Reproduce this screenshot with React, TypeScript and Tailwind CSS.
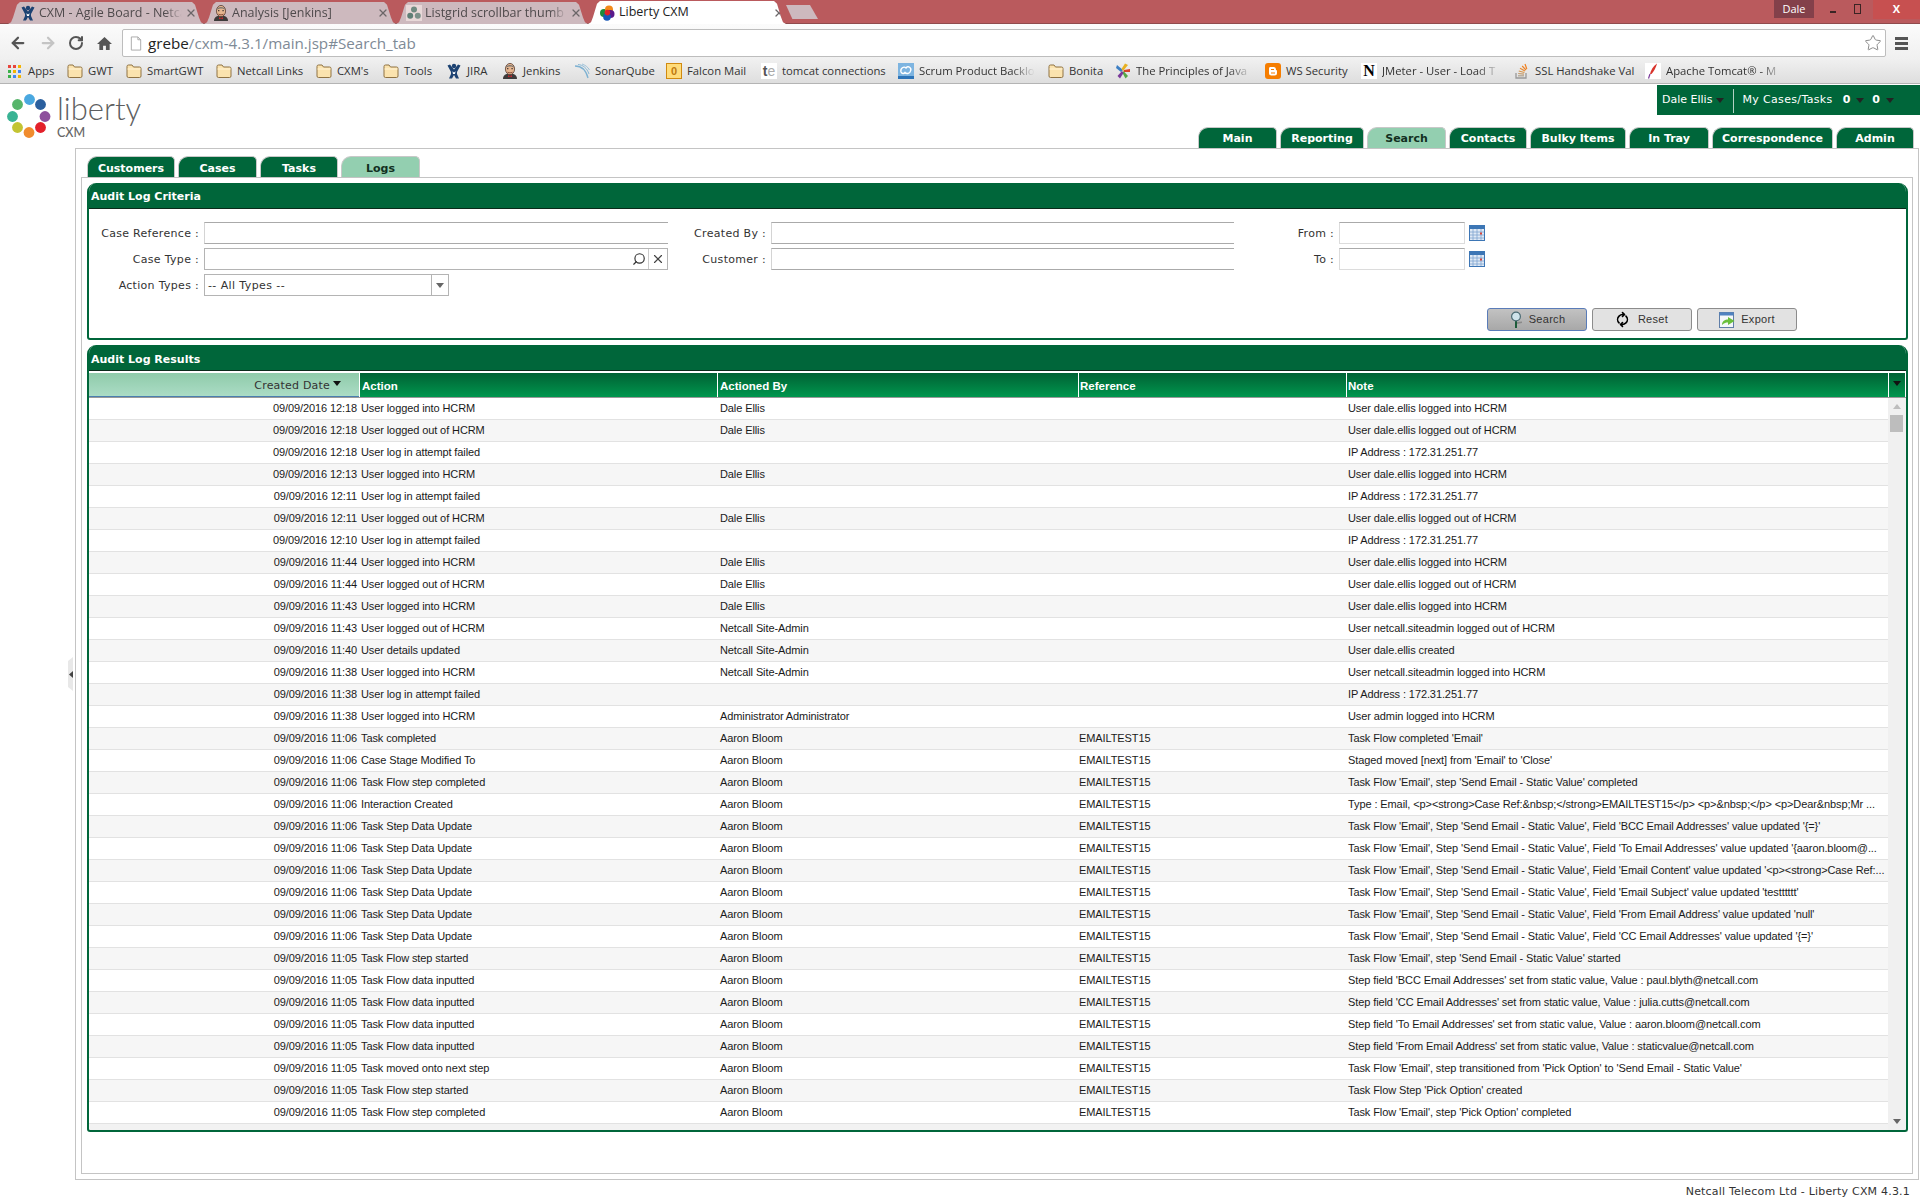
import React from 'react';
import { ArrowLeft, ArrowRight, RotateCw, Star, Search, X, RefreshCw } from 'lucide-react';

const uiFont = "font-['DejaVu_Sans',sans-serif]";
const gridFont = "font-['Liberation_Sans',sans-serif]";
const chromeFont = "font-['Open_Sans',sans-serif]";

// 收藏夾 / 分頁小圖示
const JiraIcon = () => (
  <svg viewBox="0 0 16 16" className="w-[16px] h-[16px] shrink-0">
    <circle cx="8" cy="3" r="2.2" fill="#1c4272" />
    <path d="M1.5 2.5 L4 1.5 L8 6.5 L12 1.5 L14.5 2.5 L11 9 L11 11 L13 15.5 L10 15.5 L8 12 L6 15.5 L3 15.5 L5 11 L5 9 Z" fill="#1c4272" />
    <path d="M6.4 8.2 L8 9.6 L9.6 8.2 L9 11 L7 11 Z" fill="#fff" />
  </svg>
);

const JenkinsIcon = () => (
  <svg viewBox="0 0 16 16" className="w-[16px] h-[16px] shrink-0">
    <path d="M1 16 C1 12 4 10.5 8 10.5 C12 10.5 15 12 15 16 Z" fill="#3d3a3a" />
    <ellipse cx="8" cy="6" rx="4.6" ry="5.6" fill="#e6b58f" stroke="#5b4034" strokeWidth="0.8" />
    <path d="M3.6 5 C4 1 12 1 12.4 5 C10.5 3 6 3 3.6 5 Z" fill="#7c7770" />
    <path d="M5.4 9.2 Q8 10.6 10.6 9.2" stroke="#7a3b2a" strokeWidth="0.8" fill="none" />
    <path d="M6 12.2 L8 13 L10 12.2 L10 14.2 L8 13.5 L6 14.2 Z" fill="#c8282c" />
    <rect x="5" y="5.2" width="1.4" height="1" fill="#222" />
    <rect x="9.4" y="5.2" width="1.4" height="1" fill="#222" />
  </svg>
);

const ListgridIcon = () => (
  <svg viewBox="0 0 16 16" className="w-[16px] h-[16px] shrink-0">
    <rect width="16" height="16" fill="#e8d8d8" />
    <circle cx="8" cy="4.5" r="3" fill="#6f8a80" />
    <circle cx="4.2" cy="10.8" r="3" fill="#5f7f76" />
    <circle cx="11.8" cy="10.8" r="3" fill="#7b918a" />
  </svg>
);

const LibertyTabIcon = () => (
  <svg viewBox="0 0 16 16" className="w-[16px] h-[16px] shrink-0">
    <circle cx="5" cy="8" r="4" fill="#1d8a3c" />
    <circle cx="10" cy="4.6" r="4" fill="#f28a1a" />
    <circle cx="11.5" cy="9" r="4" fill="#5a1a8c" />
    <circle cx="8" cy="12" r="3.8" fill="#1858b8" />
    <circle cx="8.4" cy="7.6" r="2.8" fill="#e0202a" />
  </svg>
);

const FolderIcon = () => (
  <svg viewBox="0 0 16 16" className="w-[16px] h-[16px] shrink-0">
    <path d="M1 3.5 Q1 2 2.5 2 L6 2 L7.5 4 L13.5 4 Q15 4 15 5.5 L15 13 Q15 14.5 13.5 14.5 L2.5 14.5 Q1 14.5 1 13 Z" fill="#fbe3ae" stroke="#8f7242" strokeWidth="1" />
    <path d="M1.5 6 L14.5 6" stroke="#fff3d6" strokeWidth="1" />
  </svg>
);

const AppsIcon = () => (
  <svg viewBox="0 0 13 13" className="w-[13px] h-[13px] shrink-0">
    <rect x="0" y="0" width="3" height="3" fill="#e8453c" />
    <rect x="5" y="0" width="3" height="3" fill="#e8453c" />
    <rect x="10" y="0" width="3" height="3" fill="#f4b400" />
    <rect x="0" y="5" width="3" height="3" fill="#3bb14a" />
    <rect x="5" y="5" width="3" height="3" fill="#f4b400" />
    <rect x="10" y="5" width="3" height="3" fill="#4285f4" />
    <rect x="0" y="10" width="3" height="3" fill="#3bb14a" />
    <rect x="5" y="10" width="3" height="3" fill="#4285f4" />
    <rect x="10" y="10" width="3" height="3" fill="#f4b400" />
  </svg>
);

const SonarIcon = () => (
  <svg viewBox="0 0 16 16" className="w-[16px] h-[16px] shrink-0" fill="none" stroke="#7fb2d2">
    <path d="M1 3 C7 3 12 7 14 15" strokeWidth="1.3" />
    <path d="M4 1.5 C9 2 13 5 15 11" strokeWidth="0.9" />
    <path d="M8 1 C11 2 14 4 15.5 7" strokeWidth="0.7" />
  </svg>
);

const FalconIcon = () => (
  <div className="w-[16px] h-[16px] shrink-0 bg-[#ffdc7a] border border-[#d08a10] flex items-center justify-center">
    <span className={`${gridFont} text-[11px] leading-none font-bold text-[#c07a10]`}>0</span>
  </div>
);

const TeIcon = () => (
  <div className="w-[16px] h-[16px] shrink-0 bg-white flex items-center justify-center">
    <span className={`${gridFont} text-[14px] leading-none font-bold text-[#555]`}>t</span>
    <span className={`${gridFont} text-[14px] leading-none text-[#aaa]`}>e</span>
  </div>
);

const ScrumIcon = () => (
  <svg viewBox="0 0 16 16" className="w-[16px] h-[16px] shrink-0">
    <rect width="16" height="16" fill="#7db4e0" />
    <rect y="13" width="16" height="3" fill="#2d74b8" />
    <path d="M3 9 C2 5 6 3 8 5 C10 2 14 5 12.5 8 C12 11 8 11 7 9.5 C6 11 4 11 3 9 Z" fill="none" stroke="#fff" strokeWidth="1.4" />
  </svg>
);

const PinwheelIcon = () => (
  <svg viewBox="0 0 16 16" className="w-[16px] h-[16px] shrink-0">
    <path d="M2 2 L8 7 L6 9 L1 5 Z" fill="#3d7fc4" />
    <path d="M10 0.5 L13 2 L8 8 L6.5 6 Z" fill="#e8b020" />
    <path d="M15 6 L15 9 L8.5 9 L9 7 Z" fill="#d8442a" />
    <path d="M13 13 L10.5 15.5 L7 9 L9 8.5 Z" fill="#55a845" />
    <path d="M5 15.5 L2.5 13 L7 8 L8.5 10 Z" fill="#7a3a9a" />
  </svg>
);

const BloggerIcon = () => (
  <svg viewBox="0 0 16 16" className="w-[16px] h-[16px] shrink-0">
    <rect width="16" height="16" rx="3" fill="#f57d00" />
    <path d="M5 4 L9 4 Q11 4 11 6.5 L11 7 Q12 7 12 8 L12 10 Q12 12.5 9.5 12.5 L6.5 12.5 Q4 12.5 4 10 L4 5.5 Q4 4 5 4 Z" fill="#fff" />
    <rect x="6" y="6" width="3" height="1" fill="#f57d00" />
    <rect x="6" y="9.5" width="4" height="1" fill="#f57d00" />
  </svg>
);

const JMeterIcon = () => (
  <div className="w-[16px] h-[16px] shrink-0 bg-white flex items-center justify-center">
    <span className="font-['Liberation_Serif',serif] text-[16px] leading-none font-bold text-black">N</span>
  </div>
);

const StackIcon = () => (
  <svg viewBox="0 0 16 16" className="w-[16px] h-[16px] shrink-0" fill="none">
    <path d="M2 10 L2 15 L12 15 L12 10" stroke="#999" strokeWidth="1.3" />
    <path d="M4 12.8 L10 12.8" stroke="#b0a28e" strokeWidth="1.2" />
    <path d="M4.2 10.5 L10 11.2" stroke="#c49a6a" strokeWidth="1.2" />
    <path d="M4.8 8 L10.4 9.5" stroke="#d8954a" strokeWidth="1.2" />
    <path d="M6 5.2 L11 8" stroke="#e88a30" strokeWidth="1.2" />
    <path d="M8.2 3 L12 7" stroke="#f08020" strokeWidth="1.2" />
    <path d="M11 1 L12.8 6" stroke="#f08020" strokeWidth="1.2" />
  </svg>
);

const FeatherIcon = () => (
  <svg viewBox="0 0 16 16" className="w-[16px] h-[16px] shrink-0">
    <rect width="16" height="16" fill="#fff" />
    <path d="M12 0.5 C8 3 6 7 5 11 L6.5 11 C9 8 11 5 12 0.5 Z" fill="#d8342c" />
    <path d="M5 11 L3.5 15.5" stroke="#7a3a9a" strokeWidth="1.2" />
  </svg>
);

const chromeTabs = [
  { title: 'CXM - Agile Board - Netca', icon: <JiraIcon />, width: 'w-[196px]', textWidth: 'w-[143px]', pad: 'pl-[12px]' },
  { title: 'Analysis [Jenkins]', icon: <JenkinsIcon />, width: 'w-[192px]', textWidth: 'w-[142px]', pad: 'pl-[9px]' },
  { title: 'Listgrid scrollbar thumb si', icon: <ListgridIcon />, width: 'w-[192px]', textWidth: 'w-[142px]', pad: 'pl-[10px]' },
];

const bookmarks = [
  { label: 'GWT', icon: <FolderIcon />, width: 'w-[25px]' },
  { label: 'SmartGWT', icon: <FolderIcon />, width: 'w-[56px]' },
  { label: 'Netcall Links', icon: <FolderIcon />, width: 'w-[66px]' },
  { label: "CXM's", icon: <FolderIcon />, width: 'w-[33px]' },
  { label: 'Tools', icon: <FolderIcon />, width: 'w-[29px]' },
  { label: 'JIRA', icon: <JiraIcon />, width: 'w-[22px]' },
  { label: 'Jenkins', icon: <JenkinsIcon />, width: 'w-[38px]' },
  { label: 'SonarQube', icon: <SonarIcon />, width: 'w-[58px]' },
  { label: 'Falcon Mail', icon: <FalconIcon />, width: 'w-[61px]' },
  { label: 'tomcat connections', icon: <TeIcon />, width: 'w-[103px]' },
  { label: 'Scrum Product Backlo', icon: <ScrumIcon />, width: 'w-[116px]', fade: true },
  { label: 'Bonita', icon: <FolderIcon />, width: 'w-[33px]' },
  { label: 'The Principles of Java', icon: <PinwheelIcon />, width: 'w-[116px]', fade: true },
  { label: 'WS Security', icon: <BloggerIcon />, width: 'w-[62px]' },
  { label: 'JMeter - User - Load T', icon: <JMeterIcon />, width: 'w-[119px]', fade: true },
  { label: 'SSL Handshake Val', icon: <StackIcon />, width: 'w-[97px]' },
  { label: 'Apache Tomcat® - M', icon: <FeatherIcon />, width: 'w-[118px]', fade: true },
];

const mainTabs = [
  { label: 'Main', width: 'w-[79px]' },
  { label: 'Reporting', width: 'w-[84px]' },
  { label: 'Search', width: 'w-[79px]', active: true },
  { label: 'Contacts', width: 'w-[78px]' },
  { label: 'Bulky Items', width: 'w-[96px]' },
  { label: 'In Tray', width: 'w-[80px]' },
  { label: 'Correspondence', width: 'w-[121px]' },
  { label: 'Admin', width: 'w-[78px]' },
];

const subTabs = [
  { label: 'Customers', width: 'w-[88px]' },
  { label: 'Cases', width: 'w-[79px]' },
  { label: 'Tasks', width: 'w-[78px]' },
  { label: 'Logs', width: 'w-[79px]', active: true },
];

const D = '09/09/2016';
const AB = 'Aaron Bloom';
const ET = 'EMAILTEST15';
const SEND = "Task Flow 'Email', Step 'Send Email - Static Value', Field";
const IP = 'IP Address : 172.31.251.77';
const IN = 'User logged into HCRM';
const OUT = 'User logged out of HCRM';
const FAIL = 'User log in attempt failed';
const DE = 'Dale Ellis';
const NS = 'Netcall Site-Admin';
const UPD = 'Task Step Data Update';
const INP = 'Task Flow data inputted';

const rows: string[][] = [
  ['12:18', IN, DE, '', 'User dale.ellis logged into HCRM'],
  ['12:18', OUT, DE, '', 'User dale.ellis logged out of HCRM'],
  ['12:18', FAIL, '', '', IP],
  ['12:13', IN, DE, '', 'User dale.ellis logged into HCRM'],
  ['12:11', FAIL, '', '', IP],
  ['12:11', OUT, DE, '', 'User dale.ellis logged out of HCRM'],
  ['12:10', FAIL, '', '', IP],
  ['11:44', IN, DE, '', 'User dale.ellis logged into HCRM'],
  ['11:44', OUT, DE, '', 'User dale.ellis logged out of HCRM'],
  ['11:43', IN, DE, '', 'User dale.ellis logged into HCRM'],
  ['11:43', OUT, NS, '', 'User netcall.siteadmin logged out of HCRM'],
  ['11:40', 'User details updated', NS, '', 'User dale.ellis created'],
  ['11:38', IN, NS, '', 'User netcall.siteadmin logged into HCRM'],
  ['11:38', FAIL, '', '', IP],
  ['11:38', IN, 'Administrator Administrator', '', 'User admin logged into HCRM'],
  ['11:06', 'Task completed', AB, ET, "Task Flow completed 'Email'"],
  ['11:06', 'Case Stage Modified To', AB, ET, "Staged moved [next] from 'Email' to 'Close'"],
  ['11:06', 'Task Flow step completed', AB, ET, "Task Flow 'Email', step 'Send Email - Static Value' completed"],
  ['11:06', 'Interaction Created', AB, ET, 'Type : Email, <p><strong>Case Ref:&nbsp;</strong>EMAILTEST15</p> <p>&nbsp;</p> <p>Dear&nbsp;Mr ...'],
  ['11:06', UPD, AB, ET, `${SEND} 'BCC Email Addresses' value updated '{=}'`],
  ['11:06', UPD, AB, ET, `${SEND} 'To Email Addresses' value updated '{aaron.bloom@...`],
  ['11:06', UPD, AB, ET, `${SEND} 'Email Content' value updated '<p><strong>Case Ref:...`],
  ['11:06', UPD, AB, ET, `${SEND} 'Email Subject' value updated 'testttttt'`],
  ['11:06', UPD, AB, ET, `${SEND} 'From Email Address' value updated 'null'`],
  ['11:06', UPD, AB, ET, `${SEND} 'CC Email Addresses' value updated '{=}'`],
  ['11:05', 'Task Flow step started', AB, ET, "Task Flow 'Email', step 'Send Email - Static Value' started"],
  ['11:05', INP, AB, ET, "Step field 'BCC Email Addresses' set from static value, Value : paul.blyth@netcall.com"],
  ['11:05', INP, AB, ET, "Step field 'CC Email Addresses' set from static value, Value : julia.cutts@netcall.com"],
  ['11:05', INP, AB, ET, "Step field 'To Email Addresses' set from static value, Value : aaron.bloom@netcall.com"],
  ['11:05', INP, AB, ET, "Step field 'From Email Address' set from static value, Value : staticvalue@netcall.com"],
  ['11:05', 'Task moved onto next step', AB, ET, "Task Flow 'Email', step transitioned from 'Pick Option' to 'Send Email - Static Value'"],
  ['11:05', 'Task Flow step started', AB, ET, "Task Flow Step 'Pick Option' created"],
  ['11:05', 'Task Flow step completed', AB, ET, "Task Flow 'Email', step 'Pick Option' completed"],
];

const Triangle = ({ className = '' }: { className?: string }) => (
  <svg viewBox="0 0 8 5" className={`w-[8px] h-[5px] ${className}`}>
    <path d="M0 0 L8 0 L4 5 Z" fill="currentColor" />
  </svg>
);

const CalendarIcon = () => (
  <svg viewBox="0 0 16 16" className="w-[16px] h-[16px] shrink-0">
    <rect x="0.5" y="0.5" width="15" height="15" fill="#dfe9f5" stroke="#3d76b5" />
    <rect x="0.5" y="0.5" width="15" height="3.5" fill="#3d76b5" />
    <path d="M4 4 V15 M8 4 V15 M12 4 V15 M1 7 H15 M1 10 H15 M1 13 H15" stroke="#7da3cf" strokeWidth="0.8" />
    <rect x="11" y="7.5" width="2" height="2" fill="#d8443a" />
  </svg>
);

const MagnifierIcon = () => (
  <svg viewBox="0 0 14 18" className="w-[14px] h-[18px] shrink-0">
    <path d="M6 10 L8 10 L8 17 L6 17 Z" fill="#1d5c3a" />
    <path d="M8 11 L13 10.5 L13 12 L8 13 Z" fill="#8a8a8a" />
    <circle cx="7" cy="5.5" r="4.4" fill="#cfe3ea" stroke="#4a6a72" strokeWidth="1.2" />
  </svg>
);

const ExportIcon = () => (
  <svg viewBox="0 0 16 16" className="w-[16px] h-[16px] shrink-0">
    <rect x="0.5" y="0.5" width="14" height="15" fill="#f4f7fa" stroke="#5f7ea8" />
    <rect x="0.5" y="0.5" width="14" height="3" fill="#4f82c0" />
    <path d="M3 13 C3 9 6 7.5 9 7.5 L9 5 L15.5 9 L9 13 L9 10.5 C7 10.5 5 11 3 13 Z" fill="#6abf3c" />
  </svg>
);

const Label = ({ width, children }: { width: string; children: React.ReactNode }) => (
  <div className={`${width} shrink-0 pr-[5px] text-right text-[11px] text-[#333] tracking-[0.3px] leading-[24px] ${uiFont}`}>{children}</div>
);

const App: React.FC = () => {
  return (
    <div className="w-[1920px] h-[1200px] flex flex-col overflow-hidden bg-white">
      {/* 瀏覽器分頁列 */}
      <div className={`h-[24px] shrink-0 flex items-end bg-[#ba5a5d] border-b border-[#8f4a4c] pl-[8px] ${chromeFont}`}>
        {chromeTabs.map((tab) => (
          <div
            key={tab.title}
            className={`${tab.width} ${tab.pad} h-[22px] shrink-0 -mb-px flex items-center gap-[3px] bg-[#cdb9be] text-[12.5px] text-[#4f4a4c] [clip-path:polygon(0_100%,3px_92%,5px_70%,9px_12%,12px_0,calc(100%-12px)_0,calc(100%-9px)_12%,calc(100%-5px)_70%,calc(100%-3px)_92%,100%_100%)]`}
          >
            {tab.icon}
            <span className={`${tab.textWidth} whitespace-nowrap [mask-image:linear-gradient(to_right,black_88%,transparent)]`}>{tab.title}</span>
            <X className="w-[12px] h-[12px] text-[#6b6668] shrink-0" strokeWidth={2.5} />
          </div>
        ))}
        <div className="w-[198px] h-[23px] pl-[11px] shrink-0 -mb-px flex items-center gap-[4px] bg-white text-[12.5px] text-[#222] [clip-path:polygon(0_100%,3px_92%,5px_70%,9px_12%,12px_0,calc(100%-12px)_0,calc(100%-9px)_12%,calc(100%-5px)_70%,calc(100%-3px)_92%,100%_100%)]">
          <LibertyTabIcon />
          <span className="w-[150px] whitespace-nowrap">Liberty CXM</span>
          <X className="w-[12px] h-[12px] text-[#6b6668] shrink-0" strokeWidth={2.5} />
        </div>
        <div className="w-[32px] h-[14px] mb-[4px] shrink-0 bg-[#cdb9be] [clip-path:polygon(0_0,75%_0,100%_100%,20%_100%)]" />
        <div className="flex-1" />
        <div className="self-start h-[18px] w-[40px] mr-[16px] bg-[#83404a] text-white text-[11px] flex items-center justify-center">Dale</div>
        <div className="self-start h-[18px] flex items-center">
          <div className="w-[6px] h-[2px] bg-[#3a2424] mt-[6px] mr-[18px]" />
          <div className="w-[7px] h-[10px] border border-[#3a2424] mr-[12px]" />
          <div className="w-[47px] h-[19px] bg-[#c75050] text-white text-[11px] font-bold flex items-center justify-center">X</div>
        </div>
      </div>

      {/* 網址列 */}
      <div className="h-[35px] shrink-0 flex items-center bg-gradient-to-b from-[#fbfbfb] to-[#f0f0f0] pl-[9px] pt-[3px]">
        <ArrowLeft className="w-[18px] h-[18px] text-[#555]" strokeWidth={3} />
        <ArrowRight className="w-[18px] h-[18px] ml-[12px] text-[#c4c4c4]" strokeWidth={3} />
        <RotateCw className="w-[16px] h-[16px] ml-[11px] text-[#555]" strokeWidth={3} />
        <svg viewBox="0 0 16 16" className="w-[15px] h-[15px] ml-[13px]">
          <path d="M8 1 L16 8.5 L13.5 8.5 L13.5 15 L9.5 15 L9.5 10.5 L6.5 10.5 L6.5 15 L2.5 15 L2.5 8.5 L0 8.5 Z" fill="#555" />
        </svg>
        <div className="w-[1764px] h-[28px] ml-[10px] flex items-center bg-white border border-[#bdbdbd] rounded-[2px] pl-[7px]">
          <svg viewBox="0 0 12 16" className="w-[12px] h-[15px] shrink-0">
            <path d="M1 1 L8 1 L11 4 L11 15 L1 15 Z M8 1 L8 4 L11 4" fill="#fff" stroke="#a8a8a8" />
          </svg>
          <span className={`ml-[6px] text-[15.2px] ${chromeFont}`}>
            <span className="text-[#222]">grebe</span>
            <span className="text-[#7e8a96]">/cxm-4.3.1/main.jsp#Search_tab</span>
          </span>
          <div className="flex-1" />
          <Star className="w-[18px] h-[18px] mr-[3px] text-[#888]" strokeWidth={1.3} />
        </div>
        <div className="ml-[9px] flex flex-col gap-[2px]">
          <div className="w-[13px] h-[3px] bg-[#555]" />
          <div className="w-[13px] h-[3px] bg-[#555]" />
          <div className="w-[13px] h-[3px] bg-[#555]" />
        </div>
      </div>

      {/* 書籤列 */}
      <div className={`h-[25px] shrink-0 flex items-center gap-[13px] pl-[8px] bg-gradient-to-b from-[#f0f0f0] to-[#dedede] border-b border-[#b4b4b4] text-[11.3px] text-[#333] ${chromeFont}`}>
        <div className="flex items-center gap-[7px]">
          <AppsIcon />
          <span className="w-[26px]">Apps</span>
        </div>
        {bookmarks.map((b) => (
          <div key={b.label} className="flex items-center gap-[5px] shrink-0">
            {b.icon}
            <span className={`${b.width} whitespace-nowrap ${b.fade ? '[mask-image:linear-gradient(to_right,black_80%,transparent)]' : ''}`}>{b.label}</span>
          </div>
        ))}
      </div>

      {/* Liberty 頁首 */}
      <div className="h-[64px] shrink-0 flex justify-between">
        <div className="flex pl-[7px] pt-[10px]">
          <svg viewBox="0 0 44 44" className="w-[44px] h-[44px] shrink-0">
            <circle cx="22.5" cy="5.5" r="5.4" fill="#4aa8e0" />
            <circle cx="33.5" cy="10.5" r="5.4" fill="#2a5f9e" />
            <circle cx="38" cy="22.5" r="5.4" fill="#8e4f9c" />
            <circle cx="33.5" cy="33.5" r="5.4" fill="#e3202a" />
            <circle cx="22" cy="38.5" r="5.4" fill="#f08c2e" />
            <circle cx="10.5" cy="33.5" r="5.4" fill="#c3c433" />
            <circle cx="5.5" cy="22.5" r="5.4" fill="#39b394" />
            <circle cx="10.5" cy="10.5" r="5.4" fill="#57b56b" />
          </svg>
          <div className="ml-[6px] -mt-px flex flex-col text-[#5d5e60] font-['Lato',sans-serif]">
            <span className="text-[31px] leading-[30px] font-light">liberty</span>
            <span className="mt-[4px] text-[12.5px] leading-[12px] font-medium text-[#666]">CXM</span>
          </div>
        </div>
        <div className="flex flex-col items-end">
          <div className={`w-[263px] h-[30px] mt-px pt-px flex items-center bg-[#00663a] pl-[5px] text-[11px] text-white ${uiFont}`}>
            <span>Dale Ellis</span>
            <Triangle className="ml-[4px] text-[#222]" />
            <div className="w-px h-[24px] bg-white/70 ml-[9px]" />
            <span className="ml-[8px] tracking-[0.35px]">My Cases/Tasks</span>
            <span className="ml-[10px] font-bold">0</span>
            <Triangle className="ml-[6px] text-[#222]" />
            <span className="ml-[8px] font-bold">0</span>
            <Triangle className="ml-[6px] text-[#222]" />
          </div>
          <div className="flex gap-[3px] mr-[6px] mt-[12px]">
            {mainTabs.map((t) => (
              <div
                key={t.label}
                className={`${t.width} h-[21px] pt-[2px] flex items-center justify-center border border-b-0 border-[#c8c8c8] rounded-tl-[10px] rounded-tr-[5px] text-[11px] font-bold ${uiFont} ${t.active ? 'bg-[#93cfb0] text-[#12301f]' : 'bg-[#00663a] text-white'}`}
              >
                {t.label}
              </div>
            ))}
          </div>
        </div>
      </div>

      {/* 主要內容 */}
      <div className="flex-1 flex min-h-0">
        <div className="w-[75px] shrink-0 flex items-center justify-end pr-[2px]">
          <div className="w-[5px] h-[34px] flex items-center justify-center bg-[#e8e8e8] [clip-path:polygon(0_12%,100%_0,100%_100%,0_88%)]">
            <svg viewBox="0 0 4 7" className="w-[4px] h-[7px]"><path d="M4 0 L0 3.5 L4 7 Z" fill="#444" /></svg>
          </div>
        </div>
        <div className="w-[844px] flex-1 mr-px">
          <div className="h-[1032px] flex flex-col border border-[#c4c4c4] pl-[5px] pr-[5px] pb-[5px] pt-[7px]">
            <div className="flex gap-[3px] pl-[6px]">
              {subTabs.map((t) => (
                <div
                  key={t.label}
                  className={`${t.width} h-[21px] pt-[4px] flex items-center justify-center border border-b-0 border-[#c8c8c8] rounded-tl-[10px] rounded-tr-[5px] text-[11px] font-bold ${uiFont} ${t.active ? 'bg-[#93cfb0] text-[#12301f]' : 'bg-[#00663a] text-white'}`}
                >
                  {t.label}
                </div>
              ))}
            </div>
            <div className="flex-1 border border-[#c4c4c4] pl-[5px] pr-[4px] pt-[5px] flex flex-col gap-[5px]">
              {/* Audit Log Criteria */}
              <div className="h-[157px] flex flex-col rounded-t-[9px] rounded-b-[3px] border-2 border-t-0 border-[#00663a] bg-white overflow-hidden">
                <div className={`h-[26px] shrink-0 -mx-[2px] px-[4px] pt-[4px] flex items-center bg-[#00663a] border-b border-[#0a2a1a] text-[11px] font-bold text-white ${uiFont}`}>
                  Audit Log Criteria
                </div>
                <div className="flex-1 pt-[13px]">
                  <div className="flex h-[22px]">
                    <Label width="w-[115px]">Case Reference :</Label>
                    <div className="w-[464px] border-y border-l border-t-[#aaa] border-b-[#aaa] border-l-[#d4d4d4]" />
                    <Label width="w-[103px]">Created By :</Label>
                    <div className="w-[463px] border-y border-l border-t-[#aaa] border-b-[#aaa] border-l-[#d4d4d4]" />
                    <Label width="w-[105px]">From :</Label>
                    <div className="w-[126px] border border-t-[#aaa] border-[#dcdcdc]" />
                    <div className="ml-[4px] flex items-center"><CalendarIcon /></div>
                  </div>
                  <div className="flex h-[22px] mt-[4px]">
                    <Label width="w-[115px]">Case Type :</Label>
                    <div className="w-[464px] flex border border-[#b4b4b4]">
                      <div className="flex-1" />
                      <div className="w-[20px] flex items-center justify-center border-r border-[#ccc]">
                        <Search className="w-[14px] h-[14px] text-[#333] -scale-x-100" strokeWidth={2} />
                      </div>
                      <div className="w-[18px] flex items-center justify-center">
                        <X className="w-[14px] h-[14px] text-[#444]" strokeWidth={2} />
                      </div>
                    </div>
                    <Label width="w-[103px]">Customer :</Label>
                    <div className="w-[463px] border-y border-l border-t-[#aaa] border-b-[#aaa] border-l-[#d4d4d4]" />
                    <Label width="w-[105px]">To :</Label>
                    <div className="w-[126px] border border-t-[#aaa] border-[#dcdcdc]" />
                    <div className="ml-[4px] flex items-center"><CalendarIcon /></div>
                  </div>
                  <div className="flex h-[22px] mt-[4px]">
                    <Label width="w-[115px]">Action Types :</Label>
                    <div className={`w-[245px] flex border border-[#b4b4b4] text-[11px] text-[#333] tracking-[0.4px] ${uiFont}`}>
                      <div className="flex-1 pl-[3px] leading-[22px]">-- All Types --</div>
                      <div className="w-[17px] flex items-center justify-center border-l border-[#b4b4b4]">
                        <Triangle className="text-[#666]" />
                      </div>
                    </div>
                  </div>
                  <div className={`flex justify-end gap-[5px] pr-[109px] mt-[12px] text-[11px] text-[#333] tracking-[0.3px] ${gridFont}`}>
                    <div className="w-[100px] h-[23px] flex items-center justify-center gap-[6px] rounded-[3px] border border-[#5a7cb8] bg-gradient-to-b from-[#c2c2c2] to-[#a8a8a8]">
                      <MagnifierIcon />
                      <span>Search</span>
                    </div>
                    <div className="w-[100px] h-[23px] flex items-center justify-center gap-[9px] rounded-[3px] border border-[#8c8c8c] bg-[#e2e2e2]">
                      <RefreshCw className="w-[13px] h-[13px] text-black -rotate-45" strokeWidth={3} />
                      <span>Reset</span>
                    </div>
                    <div className="w-[100px] h-[23px] flex items-center justify-center gap-[6px] rounded-[3px] border border-[#8c8c8c] bg-[#e2e2e2]">
                      <ExportIcon />
                      <span>Export</span>
                    </div>
                  </div>
                </div>
              </div>

              {/* Audit Log Results */}
              <div className="h-[787px] flex flex-col rounded-t-[9px] rounded-b-[3px] border-2 border-t-0 border-[#00663a] bg-[#f2f2f2] overflow-hidden">
                <div className={`h-[26px] shrink-0 -mx-[2px] px-[4px] pt-[5px] flex items-center bg-[#00663a] border-b border-[#0a2a1a] text-[11px] font-bold text-white ${uiFont}`}>
                  Audit Log Results
                </div>
                <div className="h-[27px] shrink-0 flex pt-[2px] bg-white border-b border-[#999] text-[11.5px] font-bold text-white">
                  <div className={`w-[270px] pt-[4px] flex items-center justify-end pr-[18px] bg-gradient-to-b from-[#8fcbaa] to-[#abdcc5] border-b border-[#4a7fb0] text-[11px] font-normal text-[#333] tracking-[0.2px] ${uiFont}`}>
                    <span>Created Date</span>
                    <Triangle className="ml-[3px] mb-[6px] text-[#111]" />
                  </div>
                  <div className={`w-[358px] pl-[2px] pt-[4px] flex items-center border-l border-white bg-gradient-to-b from-[#006234] to-[#00964e] ${gridFont}`}>Action</div>
                  <div className={`w-[361px] pl-[2px] pt-[4px] flex items-center border-l border-white bg-gradient-to-b from-[#006234] to-[#00964e] ${gridFont}`}>Actioned By</div>
                  <div className={`w-[268px] pl-[1px] pt-[4px] flex items-center border-l border-white bg-gradient-to-b from-[#006234] to-[#00964e] ${gridFont}`}>Reference</div>
                  <div className={`w-[542px] pl-[1px] pt-[4px] flex items-center border-l border-white bg-gradient-to-b from-[#006234] to-[#00964e] ${gridFont}`}>Note</div>
                  <div className="w-[17px] flex items-center justify-center border-l border-white bg-gradient-to-b from-[#006234] to-[#00964e]">
                    <Triangle className="text-[#111] mb-[3px]" />
                  </div>
                </div>
                <div className="flex-1 flex min-h-0">
                  <div className={`w-[1799px] shrink-0 text-[11px] text-[#1a1a1a] tracking-[-0.1px] ${gridFont}`}>
                    {rows.map((r, i) => (
                      <div key={i} className={`h-[22px] flex items-center border-b border-[#e2e2e2] ${i % 2 === 1 ? 'bg-[#f6f6f6]' : 'bg-white'}`}>
                        <div className="w-[270px] pr-[2px] text-right">{D} {r[0]}</div>
                        <div className="w-[358px] pl-[2px]">{r[1]}</div>
                        <div className="w-[361px] pl-[3px]">{r[2]}</div>
                        <div className="w-[268px] pl-[1px]">{r[3]}</div>
                        <div className="w-[542px] pl-[2px] whitespace-nowrap">{r[4]}</div>
                      </div>
                    ))}
                  </div>
                  <div className="w-[17px] shrink-0 flex flex-col bg-[#f0f0f0]">
                    <div className="h-[17px] flex items-center justify-center">
                      <Triangle className="rotate-180 text-[#bdbdbd]" />
                    </div>
                    <div className="h-[17px] mx-[2px] bg-[#bdbdbd]" />
                    <div className="flex-1" />
                    <div className="h-[17px] flex items-center justify-center">
                      <Triangle className="text-[#666]" />
                    </div>
                  </div>
                </div>
              </div>
            </div>
          </div>
          <div className={`h-[20px] pr-[9px] pt-[5px] flex items-center justify-end text-[11px] text-[#333] tracking-[0.2px] ${uiFont}`}>
            Netcall Telecom Ltd - Liberty CXM 4.3.1
          </div>
        </div>
      </div>
    </div>
  );
};

export default App;
